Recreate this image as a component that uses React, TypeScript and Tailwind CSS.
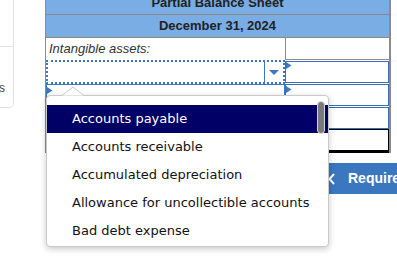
import React from "react";

function TabMark({ className }: { className: string }) {
  return (
    <svg className={"absolute " + className} width="6" height="7" viewBox="0 0 6 7">
      <polygon points="0,0 5.5,3.5 0,7" fill="#3b78c1" />
    </svg>
  );
}

export default function App() {
  const items = [
    "Accounts payable",
    "Accounts receivable",
    "Accumulated depreciation",
    "Allowance for uncollectible accounts",
    "Bad debt expense",
  ];
  return (
    <div className="relative w-[397px] h-[267px] overflow-hidden bg-white font-['Liberation_Sans',Arial,sans-serif]">
      <div className="flex items-start">
        <div className="w-[14px] h-[108px] shrink-0 border-r border-b border-[#e2e2e2] rounded-br-[5px] flex flex-col">
          <div className="h-[47px] shrink-0 border-b border-[#e2e2e2]" />
          <div className="pt-[35px] text-[12px] leading-[12px] text-[#444] -ml-[1px]">s</div>
        </div>
        <div className="ml-[31px] w-[346px] shrink-0 flex flex-col">
          <div className="-mt-[8px] border-l border-r-2 border-[#8a8a8a] flex flex-col">
            <div className="h-[23px] border-b border-[#8a8a8a] bg-[#7aade3] flex items-center justify-center text-[13px] font-bold text-[#222]">
              Partial Balance Sheet
            </div>
            <div className="h-[23px] border-b border-[#8a8a8a] bg-[#7aade3] flex items-center justify-center text-[13px] font-bold text-[#222]">
              December 31, 2024
            </div>
            <div className="h-[22px] flex">
              <div className="w-[239px] pl-[3px] flex items-center italic text-[13px] text-[#333]">Intangible assets:</div>
              <div className="flex-1 border-l border-b border-[#8a8a8a]" />
            </div>
            <div className="h-[24px] flex">
              <div className="w-[239px] border-2 border-dotted border-[#3b78c1] flex justify-end">
                <div className="w-[19px] border-l border-[#3b78c1] flex items-center justify-center">
                  <svg width="10" height="5" viewBox="0 0 10 5">
                    <polygon points="0,0 10,0 5,5" fill="#3b78c1" />
                  </svg>
                </div>
              </div>
              <div className="flex-1 relative py-[1px]">
                <div className="h-full border border-[#3a6fb3]" />
                <TabMark className="left-[1px] top-[2px]" />
              </div>
            </div>
            <div className="h-[23px] flex">
              <div className="w-[239px] relative border border-[#3b78c1]">
                <TabMark className="left-0 top-[2px]" />
              </div>
              <div className="flex-1 relative">
                <div className="h-[22px] border border-[#3a6fb3]" />
                <TabMark className="left-[1px] top-[2px]" />
              </div>
            </div>
            <div className="h-[22px] flex">
              <div className="w-[239px] border border-[#3b78c1]" />
              <div className="flex-1 border border-[#3a6fb3]" />
            </div>
            <div className="h-[24px] flex">
              <div className="w-[239px] border border-[#3b78c1]" />
              <div className="flex-1 border-x border-t border-b-[3px] border-b-double border-black" />
            </div>
          </div>
          <div className="mt-[10px] ml-[271px] w-[100px] h-[31px] shrink-0 bg-[#3a77be] flex items-center pl-[12px] gap-[13px] text-white text-[14px] font-bold">
            <svg width="7" height="12" viewBox="0 0 7 12">
              <polyline points="6,1 1.5,6 6,11" fill="none" stroke="white" strokeWidth="2" />
            </svg>
            <span>Required</span>
          </div>
        </div>
      </div>

      <svg className="absolute left-[62px] top-[86px] z-20" width="22" height="10" viewBox="0 0 22 10">
        <polygon points="0,9.5 11,1 22,9.5" fill="white" />
        <polyline points="0,9.5 11,1 22,9.5" fill="none" stroke="#c9c9c9" strokeWidth="1" />
      </svg>
      <div className="absolute left-[46px] top-[95px] w-[283px] h-[152px] z-10 bg-white border border-[#c9c9c9] rounded-[4px] shadow-[0_2px_6px_rgba(0,0,0,0.22)] pt-[9px] font-['DejaVu_Sans',Verdana,sans-serif] text-[13px]">
        {items.map((it, i) => (
          <div
            key={it}
            className={
              "h-[28px] flex items-center pl-[25px] " +
              (i === 0 ? "bg-[#000066] text-white" : "text-[#111]")
            }
          >
            {it}
          </div>
        ))}
        <div className="absolute left-[270px] top-[5px] w-[8px] h-[33px] rounded-full bg-[#7a7a7a] border border-[#d8d8d8]" />
      </div>
    </div>
  );
}
